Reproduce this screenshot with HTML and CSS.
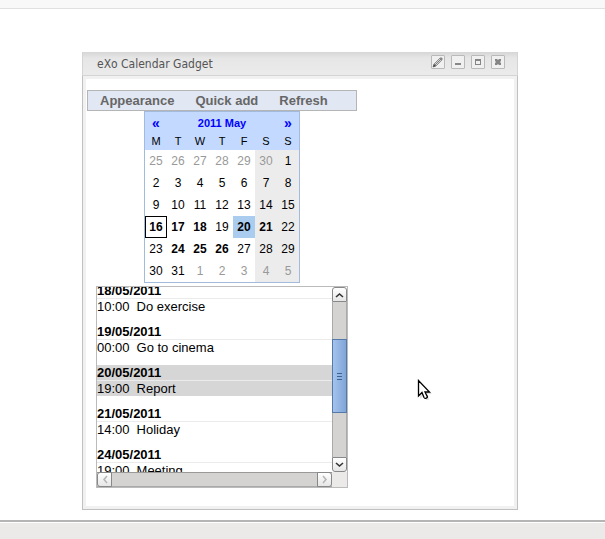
FILE: index.html
```html
<!DOCTYPE html>
<html lang="en">
<head>
<meta charset="utf-8">
<title>eXo Calendar Gadget</title>
<link rel="stylesheet" href="styles.css">
</head>
<body>
<header class="top-strip"></header>
<main class="desktop">
  <section class="window">
    <div class="title-bar">
      <h1 class="title">eXo Calendar Gadget</h1>
      <div class="controls">
        <button class="control" type="button" aria-label="Edit">
          <svg width="12" height="12" viewBox="0 0 12 12"><path d="M1 11l1-3 6-6 2 2-6 6z" fill="#d4d4d4" stroke="#909090" stroke-width="1"/><path d="M3 9l6-6" stroke="#808080"/><path d="M1 11l1-3 2 2z" fill="#444"/><path d="M8 2l1-1 2 2-1 1z" fill="#888"/></svg>
        </button>
        <button class="control" type="button" aria-label="Minimize">
          <svg width="12" height="12" viewBox="0 0 12 12"><path d="M3 7h6v2H3z" fill="#888"/></svg>
        </button>
        <button class="control" type="button" aria-label="Maximize">
          <svg width="12" height="12" viewBox="0 0 12 12"><path d="M3 3h6v6H3zM4 5v3h4V5z" fill="#858585" fill-rule="evenodd"/></svg>
        </button>
        <button class="control" type="button" aria-label="Close">
          <svg width="12" height="12" viewBox="0 0 12 12"><path d="M3 3h2l1 1 1-1h2v2L8 6l1 1v2H7L6 8 5 9H3V7l1-1-1-1z" fill="#858585"/></svg>
        </button>
      </div>
    </div>
    <div class="window-body">
      <div class="gadget">
        <nav class="menu">
          <a href="#appearance">Appearance</a>
          <a href="#quick-add">Quick add</a>
          <a href="#refresh">Refresh</a>
        </nav>
        <div class="calendar">
          <div class="month-bar">
            <button class="month-nav" type="button" aria-label="Previous month">«</button>
            <span class="month">2011 May</span>
            <button class="month-nav" type="button" aria-label="Next month">»</button>
          </div>
          <table class="days">
            <thead>
              <tr><th>M</th><th>T</th><th>W</th><th>T</th><th>F</th><th>S</th><th>S</th></tr>
            </thead>
            <tbody>
              <tr><td class="other">25</td><td class="other">26</td><td class="other">27</td><td class="other">28</td><td class="other">29</td><td class="weekend other">30</td><td class="weekend">1</td></tr>
              <tr><td>2</td><td>3</td><td>4</td><td>5</td><td>6</td><td class="weekend">7</td><td class="weekend">8</td></tr>
              <tr><td>9</td><td>10</td><td>11</td><td>12</td><td>13</td><td class="weekend">14</td><td class="weekend">15</td></tr>
              <tr><td class="busy today">16</td><td class="busy">17</td><td class="busy">18</td><td>19</td><td class="busy selected">20</td><td class="weekend busy">21</td><td class="weekend">22</td></tr>
              <tr><td>23</td><td class="busy">24</td><td class="busy">25</td><td class="busy">26</td><td>27</td><td class="weekend">28</td><td class="weekend">29</td></tr>
              <tr><td>30</td><td>31</td><td class="other">1</td><td class="other">2</td><td class="other">3</td><td class="weekend other">4</td><td class="weekend other">5</td></tr>
            </tbody>
          </table>
        </div>
        <div class="agenda">
          <div class="agenda-view">
            <div class="agenda-list">
              <div class="day"><h2 class="date">18/05/2011</h2><p class="event"><time>10:00</time>Do exercise</p></div>
              <div class="day"><h2 class="date">19/05/2011</h2><p class="event"><time>00:00</time>Go to cinema</p></div>
              <div class="day current"><h2 class="date">20/05/2011</h2><p class="event"><time>19:00</time>Report</p></div>
              <div class="day"><h2 class="date">21/05/2011</h2><p class="event"><time>14:00</time>Holiday</p></div>
              <div class="day"><h2 class="date">24/05/2011</h2><p class="event"><time>19:00</time>Meeting</p></div>
            </div>
          </div>
          <div class="scroll-y">
            <button class="arrow arrow-up" type="button" aria-label="Scroll up"><svg width="9" height="6" viewBox="0 0 9 6"><path d="M1 5l3.500-3L8 5" fill="none" stroke="#333" stroke-width="1.600"/></svg></button>
            <div class="track">
              <div class="thumb"><i></i><i></i><i></i></div>
            </div>
            <button class="arrow arrow-down" type="button" aria-label="Scroll down"><svg width="9" height="6" viewBox="0 0 9 6"><path d="M1 1l3.500 3L8 1" fill="none" stroke="#333" stroke-width="1.600"/></svg></button>
          </div>
          <div class="scroll-x">
            <button class="arrow arrow-left" type="button" aria-label="Scroll left" disabled><svg width="6" height="9" viewBox="0 0 6 9"><path d="M5 1L2 4.500 5 8" fill="none" stroke="#b5b5b5" stroke-width="1.500"/></svg></button>
            <button class="arrow arrow-right" type="button" aria-label="Scroll right" disabled><svg width="6" height="9" viewBox="0 0 6 9"><path d="M1 1l3 3.500L1 8" fill="none" stroke="#b5b5b5" stroke-width="1.500"/></svg></button>
          </div>
          <div class="corner"></div>
        </div>
      </div>
    </div>
  </section>
</main>
<footer class="bottom-bar"></footer>
<svg class="pointer" width="16" height="24" viewBox="0 0 16 24"><path d="M3 3v17l4-4 2 5h3l-1-5-1-1h5z" fill="#000" opacity=".12"/><path d="M1.500 1.500v15.500l3.500-3.500 2 5q1 1.500 2.500.5t.5-2l-2-4h4.500z" fill="#fff" stroke="#000" stroke-width="1.300"/></svg>
</body>
</html>
```

FILE: styles.css
```css
* {
  box-sizing: border-box;
}

body {
  margin: 0;
  min-height: 100vh;
  display: flex;
  flex-direction: column;
  background: #fff;
  color: #000;
  font-family: "Liberation Sans", Arial, sans-serif;
  font-size: 13px;
}

button {
  margin: 0;
  padding: 0;
  font: inherit;
}

svg {
  display: block;
}

.top-strip {
  height: 9px;
  background: #f8f8f8;
  border-bottom: 1px solid #e0e0e0;
}

.desktop {
  flex: 1;
  display: flex;
  padding: 43px 87px 10px 82px;
}

.window {
  flex: 1;
  display: flex;
  flex-direction: column;
}

.title-bar {
  display: flex;
  justify-content: space-between;
  height: 24px;
  padding: 3px 12px 0 14px;
  background: linear-gradient(#d6d6d6, #e6e6e6 6px, #ebebeb);
  border: solid #d4d4d4;
  border-width: 0 1px 1px;
}

.title {
  margin: 0;
  color: #555;
  font: 12px/18px "DejaVu Sans Condensed", "DejaVu Sans", sans-serif;
}

.controls {
  display: flex;
  gap: 6px;
}

.control {
  width: 14px;
  height: 14px;
  border: 1px solid #b9b9b9;
  border-radius: 1px;
  background: #f0f0f0;
}

.window-body {
  flex: 1;
  display: flex;
  padding: 3px;
  background: #f1f1f1;
  border: 1px solid #c0c0c0;
  border-top: 0;
}

.gadget {
  flex: 1;
  padding: 11px 1px;
  background: #fff;
}

.menu {
  display: flex;
  gap: 21px;
  width: 270px;
  padding: 0 12px;
  background: #e1e7f3;
  border: 1px solid #b5b5b5;
  line-height: 19px;
}

.menu a {
  color: #666;
  font-weight: bold;
  text-decoration: none;
}

.calendar {
  width: 156px;
  margin-left: 57px;
  border: 1px solid #a2bbdd;
}

.month-bar {
  display: flex;
  justify-content: space-between;
  height: 22px;
  background: #c3d9ff;
  color: #00f;
  font-size: 11px;
  font-weight: bold;
  line-height: 22px;
}

.month-nav {
  width: 22px;
  border: 0;
  background: none;
  color: #00f;
  font-size: 14px;
}

.days {
  width: 100%;
  border-collapse: collapse;
  table-layout: fixed;
  font-size: 12px;
  text-align: center;
}

.days th {
  height: 16px;
  padding: 0 0 2px;
  background: #c3d9ff;
  font-size: 11px;
  font-weight: normal;
  line-height: 14px;
}

.days td {
  height: 22px;
  padding: 0;
}

.days .weekend {
  background: #ececec;
}

.days .other {
  color: #999;
}

.days .busy {
  font-weight: bold;
}

.days .today {
  outline: 1px solid #000;
  outline-offset: -1px;
}

.days .selected {
  background: #aaccee;
}

.agenda {
  display: grid;
  grid-template: 185px 15px / 1fr 15px;
  width: 252px;
  margin: 3px 0 0 9px;
  border: 1px solid #bbb;
}

.agenda-view {
  overflow: hidden;
}

.agenda-list {
  display: grid;
  gap: 10px;
  margin-top: -4px;
}

.date {
  margin: 0;
  border-bottom: 1px solid #ebebeb;
  font-size: 13px;
  line-height: 15px;
}

.event {
  display: flex;
  gap: 7px;
  margin: 0;
  line-height: 15px;
}

.current {
  background: #d6d6d6;
}

.scroll-y {
  display: flex;
  flex-direction: column;
}

.track {
  flex: 1;
  padding-top: 37px;
  background: #d5d3d1;
  border: solid #aaa;
  border-width: 0 1px;
}

.thumb {
  display: flex;
  flex-direction: column;
  align-items: center;
  justify-content: center;
  gap: 2px;
  height: 74px;
  margin: 0 -1px;
  background: linear-gradient(90deg, #a4c3ed, #7fa5d8);
  border: 1px solid #5579a8;
}

.thumb i {
  width: 5px;
  height: 1px;
  background: #3f6391;
}

.arrow {
  display: flex;
  align-items: center;
  justify-content: center;
  width: 15px;
  height: 15px;
  background: linear-gradient(#fff, #e6e6e6);
  border: 1px solid #888;
}

.arrow-up {
  border-radius: 3px 3px 0 0;
}

.arrow-down {
  border-radius: 0 0 3px 3px;
}

.arrow-left {
  border-radius: 3px 0 0 3px;
}

.arrow-right {
  border-radius: 0 3px 3px 0;
}

.scroll-x {
  display: flex;
  justify-content: space-between;
  background: #d5d3d1;
  box-shadow: inset 0 1px #999, inset 0 -1px #aaa;
}

.corner {
  background: #ebeae8;
}

.bottom-bar {
  height: 19px;
  background: #ebeae8;
  border-top: 2px solid #b5b5b5;
  box-shadow: inset 0 1px #fff;
}

.pointer {
  position: absolute;
  left: 417px;
  top: 379px;
}
```
